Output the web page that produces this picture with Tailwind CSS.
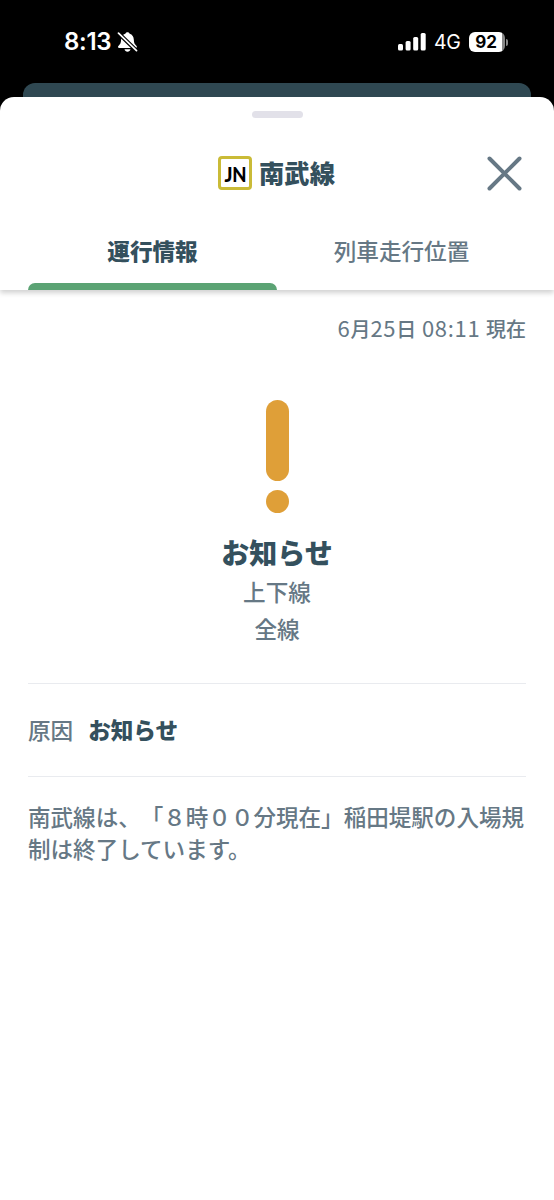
<!DOCTYPE html>
<html lang="ja">
<head>
<meta charset="utf-8">
<title>南武線 運行情報</title>
<script src="https://cdn.jsdelivr.net/npm/@tailwindcss/browser@4"></script>
</head>
<body class="bg-black">
<div class="flex h-[1200px] w-[554px] flex-col overflow-hidden bg-black font-['Noto_Sans_CJK_JP',sans-serif] font-medium text-[#667885] [text-spacing-trim:space-all]">
  <header class="flex h-[83px] shrink-0 items-start justify-between pl-16 pr-[46px] pt-[27px] font-['Inter',sans-serif] text-white">
    <div class="flex h-[30px] items-center gap-1">
      <span class="w-[49px] whitespace-nowrap text-[24px] font-semibold leading-[30px] tracking-[-0.3px]">8:13</span>
      <svg class="h-[20px] w-[21px]" viewBox="0 0 21 20" fill="none">
        <path d="M10.500.3c1.100 0 1.900.6 2.200 1.500 2.600.8 4 3 4.100 5.700.1 3.700.9 4.700 2.500 6.200 1.100 1.100.7 2.300-.8 2.300H2.400c-1.500 0-1.900-1.200-.8-2.300 1.600-1.500 2.400-2.500 2.500-6.200.1-2.700 1.600-4.900 4.200-5.700C8.600.9 9.400.3 10.500.3zM7.500 17.200h6c-.3 1.500-1.500 2.500-3 2.500s-2.700-1-3-2.500z" fill="#fff"/>
        <path d="M1.500 1.200 19.500 18.700" stroke="#000" stroke-width="4"/>
        <path d="M1.500 1.200 19.500 18.700" stroke="#fff" stroke-width="1.700" stroke-linecap="round"/>
      </svg>
    </div>
    <div class="flex h-[30px] items-center">
      <svg class="h-[18px] w-[28px]" viewBox="0 0 28 18" fill="#fff">
        <rect x="0" y="11" width="5" height="6.500" rx="1.500"/><rect x="7.600" y="8" width="5" height="9.500" rx="1.500"/><rect x="15.200" y="4" width="5" height="13.500" rx="1.500"/><rect x="22.700" y="0" width="5" height="17.500" rx="1.500"/>
      </svg>
      <span class="ml-2 w-[28px] whitespace-nowrap text-[19.500px] font-normal leading-[30px] tracking-[-0.3px]">4G</span>
      <div class="ml-[7px] flex items-center gap-px">
        <div class="flex h-5 w-9 items-center justify-center rounded-[6px] bg-[linear-gradient(90deg,#fff_92%,#888_92%)] pr-[2px] text-[17px] font-bold leading-5 tracking-[-0.2px] text-black">92</div>
        <div class="h-[7px] w-[2px] rounded-r-full bg-[#888]"></div>
      </div>
    </div>
  </header>
  <div class="mx-[23px] h-[14px] shrink-0 rounded-t-[12px] bg-[#2f4852]"></div>
  <main class="flex flex-1 flex-col bg-[linear-gradient(#000_20px,#fff_20px)]">
    <div class="flex flex-1 flex-col rounded-t-[14px] bg-white">
      <div class="mx-auto mt-[14px] h-[7px] w-[51px] rounded-full bg-[#e2e1e9]"></div>
      <div class="relative mt-[34px] flex h-[42px] items-center justify-center gap-[7px]">
        <div class="-ml-px flex h-[34px] w-[34px] items-center justify-center rounded-[4px] border-[3px] border-[#cabb37]"><span class="scale-x-88 font-['Lato',sans-serif] text-[21px] font-black leading-none tracking-[-0.3px] text-black">JN</span></div>
        <h1 class="pb-[2px] text-[25.300px] font-black leading-[38px] text-[#34505d]">南武線</h1>
        <svg class="absolute right-[32px] top-[4px] h-[35px] w-[35px]" viewBox="0 0 35 35" fill="none" stroke="#667885" stroke-width="4" stroke-linecap="round"><path d="M2.500 2.500 32.500 32.500M32.500 2.500 2.500 32.500"/></svg>
      </div>
      <nav class="flex h-[96px] px-7 text-[22.600px] shadow-[0_3px_5px_rgba(0,0,0,0.18)] [clip-path:inset(0_0_-12px_0)]">
        <div class="flex flex-1 flex-col text-center font-black text-[#34505d]"><span class="pt-[41px] leading-[32px]">運行情報</span><div class="mt-auto h-[7px] rounded-t-[7px] bg-[#5ba374]"></div></div>
        <div class="flex-1 pt-[41px] text-center leading-[32px]">列車走行位置</div>
      </nav>
      <section class="flex flex-col px-7">
        <p class="mt-[21px] text-right text-[20px] leading-[32px]"><span class="text-[22px] font-normal tracking-[0.700px]">6</span>月<span class="text-[22px] font-normal tracking-[0.700px]">25</span>日<span class="text-[22px] font-normal tracking-[0.700px]"> 08:11 </span>現在</p>
        <div class="mt-[55px] flex flex-col items-center">
          <div class="h-[81px] w-[23px] rounded-full bg-[#df9f38]"></div>
          <div class="mt-[9px] h-[23px] w-[23px] rounded-full bg-[#df9f38]"></div>
          <h2 class="mt-[19px] text-[28px] font-black leading-[40px] text-[#34505d]">お知らせ</h2>
          <p class="mt-[2px] text-center text-[22.600px] leading-[36.500px]">上下線<br>全線</p>
        </div>
        <div class="mt-[36px] flex h-[94px] items-center gap-[15px] border-y border-[#e9ebef] text-[22.600px]"><span>原因</span><strong class="font-black text-[#34505d]">お知らせ</strong></div>
        <p class="mt-[23px] whitespace-nowrap text-[22.550px] leading-[32px]">南武線は、「８時００分現在」稲田堤駅の入場規<br>制は終了しています。</p>
      </section>
    </div>
  </main>
</div>
</body>
</html>
